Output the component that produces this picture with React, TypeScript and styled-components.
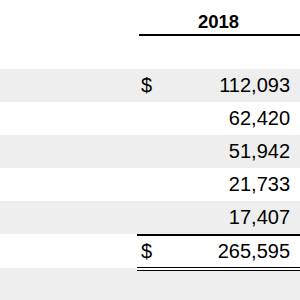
import React from "react";
import styled, { createGlobalStyle } from "styled-components";

const Global = createGlobalStyle`
  html, body { margin: 0; padding: 0; background: #ffffff; overflow: hidden; }
  body { font-family: "Liberation Sans", Arial, sans-serif; color: #000; }
`;

const Table = styled.div`
  width: 300px;
  display: flex;
  flex-direction: column;
`;

const HeaderRow = styled.div`
  display: grid;
  grid-template-columns: 139px 1fr;
  height: 36px;
`;

const HeaderCell = styled.div`
  grid-column: 2;
  border-bottom: 2px solid #000;
  font-weight: bold;
  font-size: 18.5px;
  line-height: 1;
  text-align: center;
  padding-top: 13px;
  padding-right: 2px;
  box-sizing: border-box;
`;

const Spacer = styled.div`
  height: 33px;
`;

const Row = styled.div<{ $shaded?: boolean; $h?: number }>`
  display: grid;
  grid-template-columns: 137px 1fr;
  height: ${(p) => p.$h ?? 33}px;
  background: ${(p) => (p.$shaded ? "#eeeeee" : "#ffffff")};
`;

const Amount = styled.div<{ $total?: boolean }>`
  grid-column: 2;
  position: relative;
  display: flex;
  justify-content: space-between;
  align-items: center;
  padding: 0 10px 0 4px;
  font-size: 20px;
  box-sizing: border-box;
  height: ${(p) => (p.$total ? "37px" : "100%")};
  border-top: ${(p) => (p.$total ? "2px solid #000" : "none")};
  border-bottom: ${(p) => (p.$total ? "4px double #000" : "none")};
  background: ${(p) => (p.$total ? "#ffffff" : "transparent")};
`;

const Dollar = styled.span``;
const Value = styled.span``;

const Filler = styled.div`
  height: 40px;
  background: #eeeeee;
`;

const rows = [
  { dollar: true, value: "112,093" },
  { dollar: false, value: "62,420" },
  { dollar: false, value: "51,942" },
  { dollar: false, value: "21,733" },
  { dollar: false, value: "17,407" },
];

export default function App() {
  return (
    <>
      <Global />
      <Table>
        <HeaderRow>
          <HeaderCell>2018</HeaderCell>
        </HeaderRow>
        <Spacer />
        {rows.map((r, i) => (
          <Row key={i} $shaded={i % 2 === 0}>
            <Amount>
              <Dollar>{r.dollar ? "$" : ""}</Dollar>
              <Value>{r.value}</Value>
            </Amount>
          </Row>
        ))}
        <Row $h={34}>
          <Amount $total>
            <Dollar>$</Dollar>
            <Value>265,595</Value>
          </Amount>
        </Row>
        <Filler />
      </Table>
    </>
  );
}
